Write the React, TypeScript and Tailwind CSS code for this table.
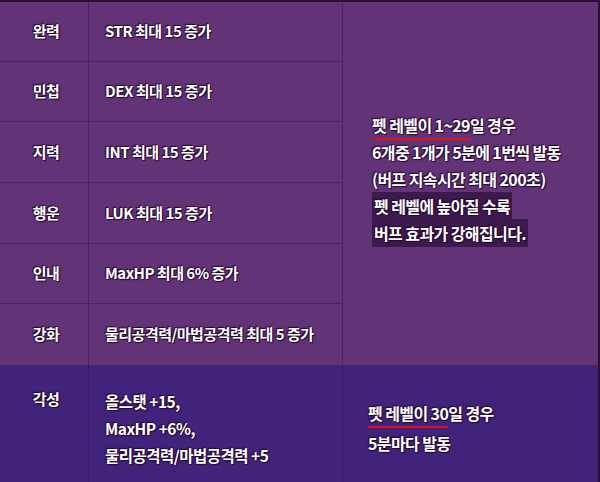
import React from "react";

const font = { fontFamily: '"Noto Sans CJK KR", "Noto Sans", sans-serif' };

const rows: [string, string][] = [
  ["완력", "STR 최대 15 증가"],
  ["민첩", "DEX 최대 15 증가"],
  ["지력", "INT 최대 15 증가"],
  ["행운", "LUK 최대 15 증가"],
  ["인내", "MaxHP 최대 6% 증가"],
  ["강화", "물리공격력/마법공격력 최대 5 증가"],
];

const base =
  "text-white font-semibold [text-shadow:0_0_2px_#24092f,1px_1px_1px_#24092f,-1px_-1px_1px_#24092f]";
const txt = `${base} text-[15px] tracking-[-0.5px]`;
const big = `${base} text-[16px] tracking-[-0.6px]`;

export default function App() {
  return (
    <div
      className="w-[600px] h-[482px] overflow-hidden bg-[#41237c] border-t-2 border-r-2 border-[#2a1034] flex flex-col"
      style={font}
    >
      <div className="flex bg-[#633377] h-[364px] border-b border-[#4c2263]">
        <div className="w-[343px] flex flex-col border-r border-[#4c2263]">
          {rows.map(([a, b], i) => (
            <div
              key={i}
              className={`flex ${i < 5 ? "border-b border-[#4c2263]" : ""} ${i === 0 ? "h-[60px]" : "h-[61px]"}`}
            >
              <div className={`w-[89px] border-r border-[#4c2263] flex items-center justify-center pl-[4px] ${txt}`}>
                {a}
              </div>
              <div className={`flex-1 flex items-center pl-[16px] ${txt}`}>{b}</div>
            </div>
          ))}
        </div>
        <div className={`flex-1 flex flex-col justify-center pl-[29px] pb-[8px] ${big} leading-[27px]`}>
          <div>
            <span className="border-b-2 border-[#e0101a] pb-[1px]">펫 레벨이 1~29</span>일 경우
          </div>
          <div>6개중 1개가 5분에 1번씩 발동</div>
          <div>(버프 지속시간 최대 200초)</div>
          <div>
            <span className="bg-[#3c1a4d] px-[2px] py-[2px]">펫 레벨에 높아질 수록</span>
          </div>
          <div>
            <span className="bg-[#3c1a4d] px-[2px] py-[2px]">버프 효과가 강해집니다.</span>
          </div>
        </div>
      </div>
      <div className="flex flex-1">
        <div className="w-[343px] flex border-r border-[#36196a]">
          <div className={`w-[89px] border-r border-[#36196a] flex justify-center pt-[22px] pl-[4px] ${txt}`}>각성</div>
          <div className={`flex-1 pl-[16px] pt-[22px] leading-[27px] ${base} text-[15.5px] tracking-[-0.5px]`}>
            <div>올스탯 +15,</div>
            <div>MaxHP +6%,</div>
            <div>물리공격력/마법공격력 +5</div>
          </div>
        </div>
        <div className={`flex-1 pl-[25px] pt-[32px] leading-[30px] ${big}`}>
          <div>
            <span className="border-b-2 border-[#e0101a] pb-[1px]">펫 레벨이 30</span>일 경우
          </div>
          <div>5분마다 발동</div>
        </div>
      </div>
    </div>
  );
}
